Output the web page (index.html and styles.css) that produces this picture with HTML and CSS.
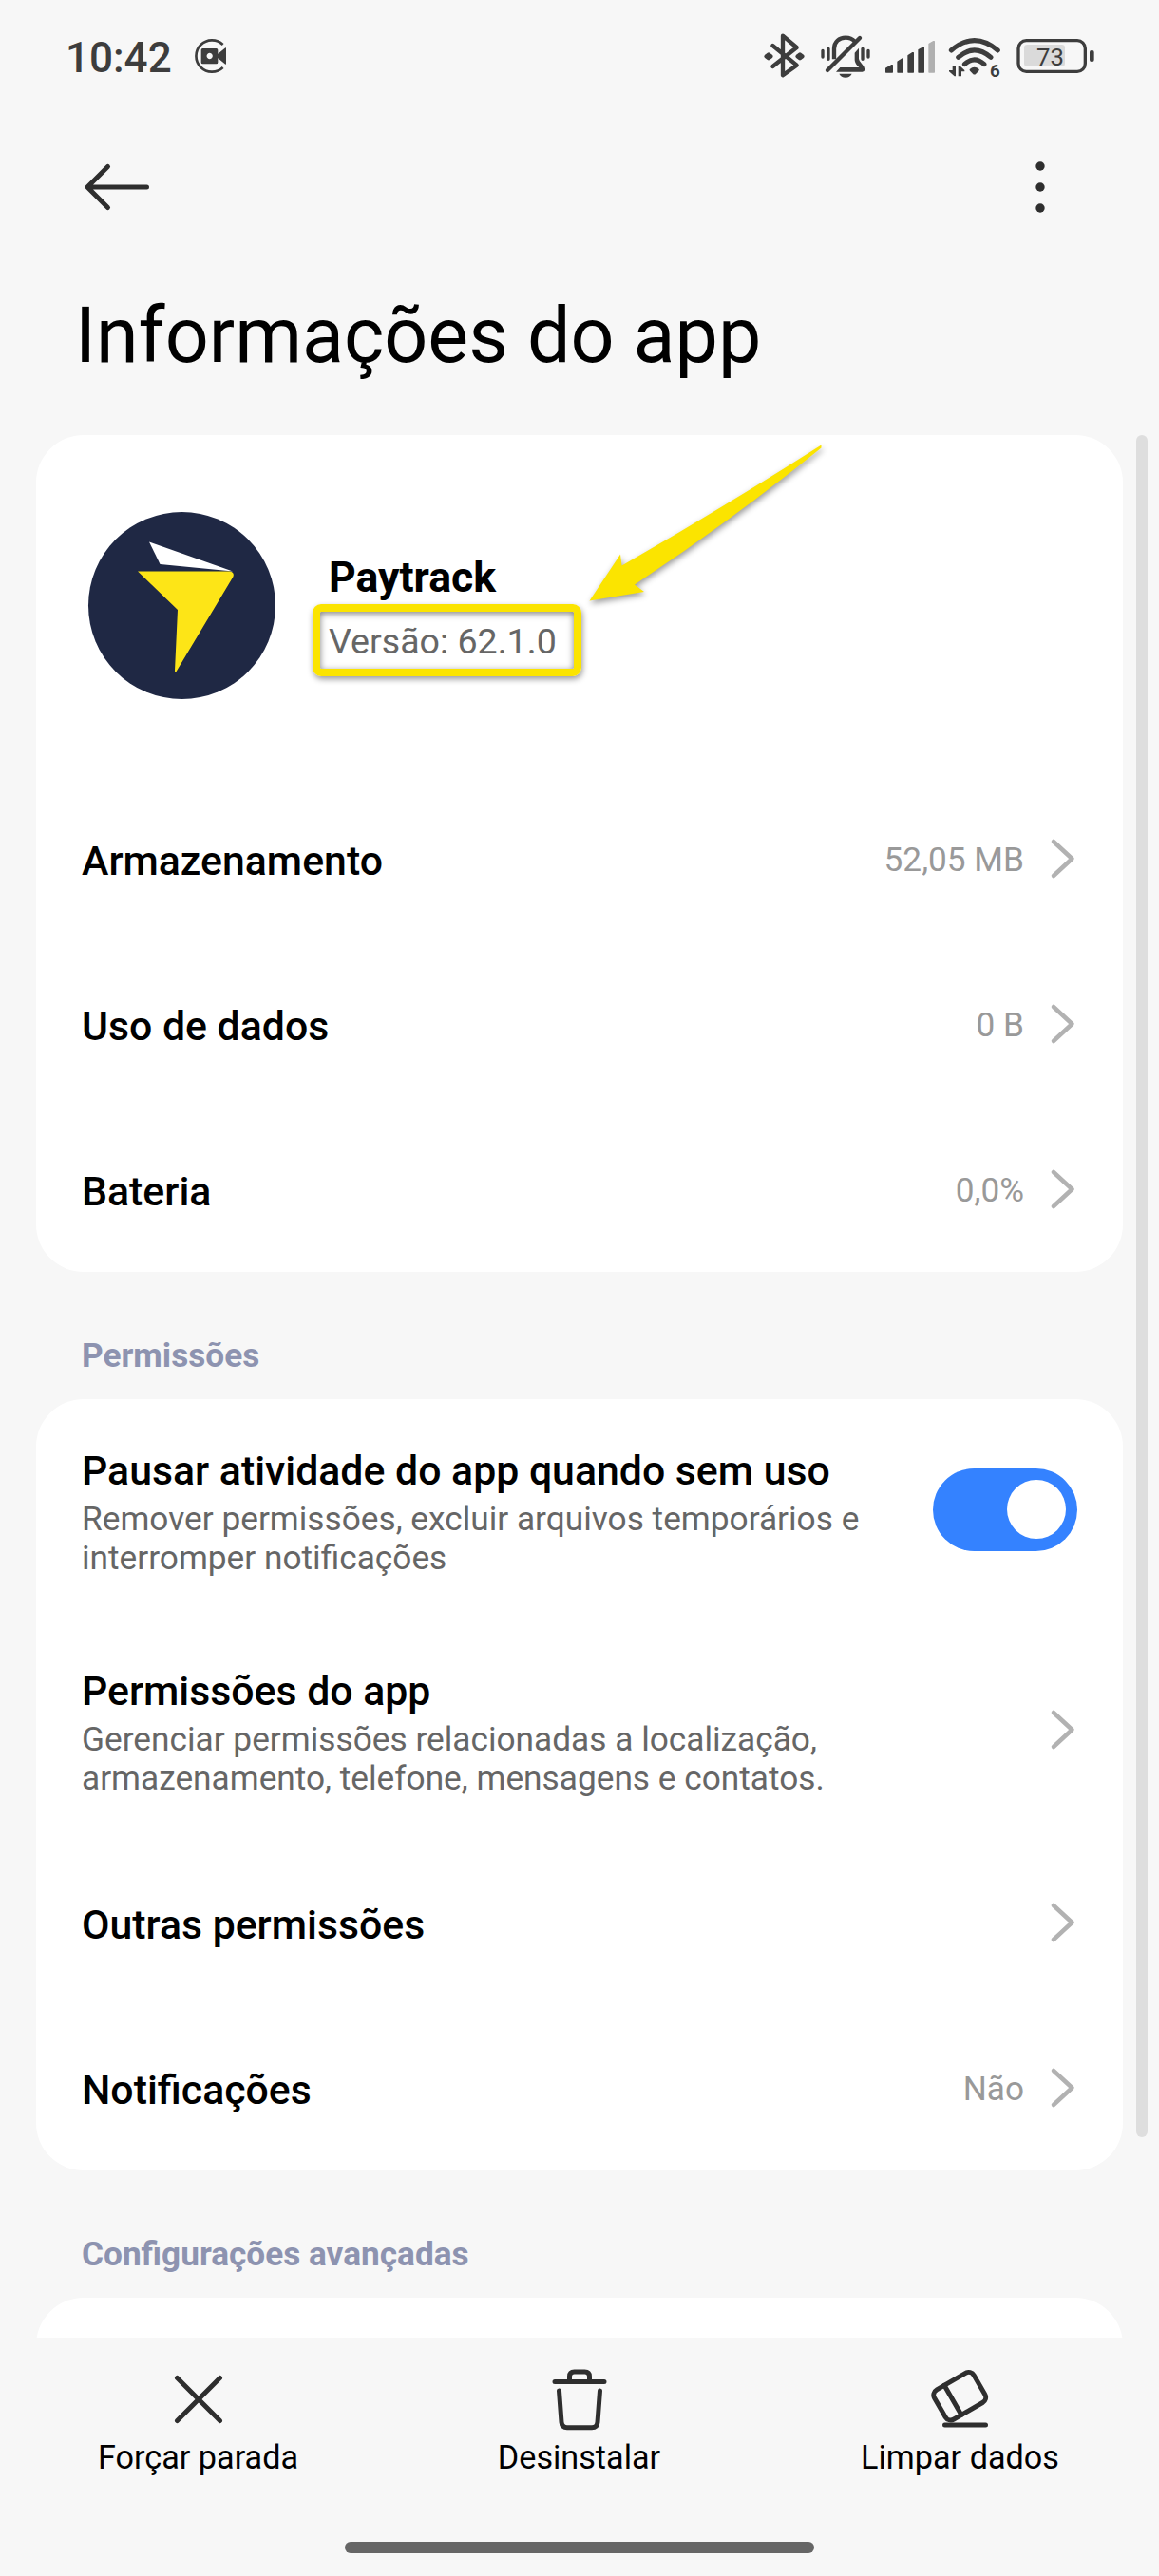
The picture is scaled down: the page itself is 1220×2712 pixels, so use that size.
FILE: index.html
```html
<!DOCTYPE html>
<html lang="pt-BR">
<head>
<meta charset="utf-8">
<title>Informações do app</title>
<link rel="stylesheet" href="styles.css">
</head>
<body>
<div class="screen">
  <header class="status">
    <span class="clock">10:42</span>
    <svg class="rec" width="36" height="38" viewBox="609 120 108 114">
      <path d="M704 141A50 50 0 1 0 704 213" fill="none" stroke="#3d3d3d" stroke-width="8"/>
      <path fill="#3d3d3d" fill-rule="evenodd" d="M640 153H683Q688 153 688 158V170L712 151Q714 150 714 153V201Q714 204 712 203L688 184V197Q688 202 683 202H640Q635 202 635 197V158Q635 153 640 153ZM662 167.500a9.500 9.500 0 1 0 .1 0Z"/>
    </svg>
    <div class="indicators">
      <svg width="54" height="51" viewBox="66 99 162 153">
        <path d="M100 144L176 206L132 238V113L176 150L100 210" fill="none" stroke="#3d3d3d" stroke-width="13" stroke-linejoin="round" stroke-linecap="round"/>
        <path d="M79 178l8-6 8 6-8 6zM178 178l8-6 8 6-8 6z" fill="#3d3d3d" stroke="#3d3d3d" stroke-width="12" stroke-linejoin="round"/>
      </svg>
      <svg width="68" height="51" viewBox="228 99 204 153">
        <g fill="none" stroke="#3d3d3d" stroke-linecap="round">
          <path stroke-width="13" stroke-linecap="butt" d="M294 187V154C294 132 310 119 330 119C342 119 352 123 359 131"/>
          <path stroke-width="13" d="M273 222L375 120"/>
          <path stroke-width="10" d="M258 160V180M276 154V187M384 154V187M402 160V180"/>
        </g>
        <path fill="#3d3d3d" d="M359 167L372 152V186Q373 193 381 201Q391 211 391 220Q390 227 383 227H300L313 213H373Q360 203 359 190ZM310 233H350Q344 245 330 245Q316 245 310 233Z"/>
      </svg>
      <svg width="68" height="51" viewBox="432 99 204 153">
        <g fill="#3d3d3d" stroke="#3d3d3d" stroke-width="4" stroke-linejoin="round">
          <path d="M458 216L476 206H478V228H458ZM495 195L509 186H511V228H495ZM528 176L542 167H544V228H528ZM561 158L575 150H577V228H561Z"/>
          <path fill="#b0b0b0" stroke="#b0b0b0" d="M594 139L608 131H610V228H594Z"/>
        </g>
      </svg>
      <svg width="70" height="51" viewBox="636 99 210 153">
        <g fill="none" stroke="#3d3d3d" stroke-width="15" stroke-linecap="round">
          <path d="M664 159Q737 97 811 159"/>
          <path d="M686 181Q737 136 789 181"/>
          <path d="M706 203Q737 174 768 203"/>
        </g>
        <path fill="#3d3d3d" d="M722 219Q737 205 752 219Q753 222 750 225L742 233Q737 238 732 233L724 225Q721 222 722 219ZM668 207H678V241H674L657 226V222H668ZM686 207H690L706 222V226H696V241H686Z"/>
        <text class="badge" x="786" y="243">6</text>
      </svg>
      <svg width="92" height="51" viewBox="846 99 276 153">
        <rect x="894" y="141" width="129" height="69" rx="10" fill="#dadada"/>
        <rect x="876" y="128" width="211" height="98" rx="25" fill="none" stroke="#3d3d3d" stroke-width="10"/>
        <rect x="1101" y="159" width="14" height="36" rx="6" fill="#3d3d3d"/>
        <text class="level" x="933" y="207">73</text>
      </svg>
    </div>
  </header>

  <nav class="appbar">
    <svg width="70" height="50" viewBox="0 0 70 50" fill="none" stroke="#2e2e2e" stroke-width="5" stroke-linecap="round" stroke-linejoin="round">
      <path d="M26.500 3.500L5 25L26.500 46.500M6 25H67.500"/>
    </svg>
    <svg width="12" height="56" viewBox="0 0 12 56" fill="#2e2e2e">
      <circle cx="6" cy="6" r="4.700"/><circle cx="6" cy="28" r="4.700"/><circle cx="6" cy="50" r="4.700"/>
    </svg>
  </nav>

  <h1 class="title">Informações do app</h1>

  <main class="content">
    <section class="card">
      <div class="app">
        <svg width="197" height="197" viewBox="0 0 197 197">
          <circle cx="98.500" cy="98.500" r="98.500" fill="#1f2844"/>
          <path fill="#fff" d="M64 31.500L152 62.500L75.500 55Z"/>
          <path fill="#fde517" d="M52 62.500H149Q154 63.500 152.500 68L92.500 168Q91 170.500 91 167L94 103Z"/>
        </svg>
        <div class="app-text">
          <div class="app-name">Paytrack</div>
          <div class="app-version">Versão: 62.1.0</div>
        </div>
        <div class="highlight"></div>
        <svg class="pointer" width="260" height="190" viewBox="612 458 260 190">
          <path fill="#fbe400" d="M620.500 632.500L653 583.500L654.500 595.500Q760 535 864.500 468.500V471.500Q770 548 668 615.500L678 623Z"/>
        </svg>
      </div>
      <div class="row"><span class="label">Armazenamento</span><span class="value">52,05 MB</span><svg class="chev" viewBox="0 0 26 42"><path d="M3 3L22.500 21L3 39"/></svg></div>
      <div class="row"><span class="label">Uso de dados</span><span class="value">0 B</span><svg class="chev" viewBox="0 0 26 42"><path d="M3 3L22.500 21L3 39"/></svg></div>
      <div class="row"><span class="label">Bateria</span><span class="value">0,0%</span><svg class="chev" viewBox="0 0 26 42"><path d="M3 3L22.500 21L3 39"/></svg></div>
    </section>

    <h2 class="section">Permissões</h2>
    <section class="card">
      <div class="row tall">
        <div class="text">
          <div class="label">Pausar atividade do app quando sem uso</div>
          <div class="desc">Remover permissões, excluir arquivos temporários e<br>interromper notificações</div>
        </div>
        <div class="toggle"><div class="knob"></div></div>
      </div>
      <div class="row tall">
        <div class="text">
          <div class="label">Permissões do app</div>
          <div class="desc">Gerenciar permissões relacionadas a localização,<br>armazenamento, telefone, mensagens e contatos.</div>
        </div>
        <svg class="chev" viewBox="0 0 26 42"><path d="M3 3L22.500 21L3 39"/></svg>
      </div>
      <div class="row"><span class="label">Outras permissões</span><svg class="chev" viewBox="0 0 26 42"><path d="M3 3L22.500 21L3 39"/></svg></div>
      <div class="row"><span class="label">Notificações</span><span class="value">Não</span><svg class="chev" viewBox="0 0 26 42"><path d="M3 3L22.500 21L3 39"/></svg></div>
    </section>

    <h2 class="section">Configurações avançadas</h2>
    <section class="card partial"></section>
    <div class="scrollbar"></div>
  </main>

  <footer class="actions">
    <div class="action">
      <svg class="icon" viewBox="0 0 70 70"><path d="M12.500 12.500L57.500 57.500M57.500 12.500L12.500 57.500"/></svg>
      <span>Forçar parada</span>
    </div>
    <div class="action">
      <svg class="icon" viewBox="0 0 70 70"><path d="M9 16.500H61M24.500 16V11Q24.500 6 29.500 6H40.500Q45.500 6 45.500 11V16M13.500 26L16 59Q16.500 64.800 22 64.800H48Q53.500 64.800 54 59L56.500 26"/></svg>
      <span>Desinstalar</span>
    </div>
    <div class="action">
      <svg class="icon" viewBox="0 0 70 70"><g transform="translate(34.200 31.700) rotate(-30)"><rect x="-24" y="-18" width="48" height="36" rx="6.500"/><path d="M-8.300 -18V18"/></g><path d="M18.500 62H61.500"/></svg>
      <span>Limpar dados</span>
    </div>
  </footer>
  <div class="home"></div>
</div>
</body>
</html>
```

FILE: styles.css
```css
* { box-sizing: border-box; }

body {
  margin: 0;
  background: #f7f7f7;
  font-family: Roboto, "Noto Sans", sans-serif;
  color: #000;
}

.screen {
  width: 1220px;
  height: 2712px;
  display: flex;
  flex-direction: column;
  overflow: hidden;
}

svg { display: block; flex: none; overflow: visible; }

.status {
  height: 117px;
  padding: 0 66px 0 69px;
  display: flex;
  align-items: center;
}

.clock {
  width: 134px;
  padding-top: 5px;
  font-size: 44px;
  line-height: 60px;
  font-weight: 500;
  color: #3d3d3d;
}

.indicators { display: flex; margin-left: auto; }

.badge { font-size: 56px; font-weight: 700; fill: #3d3d3d; }
.level { font-size: 77px; fill: #3d3d3d; }

.appbar {
  height: 159px;
  padding: 0 119px 0 87px;
  display: flex;
  align-items: center;
  justify-content: space-between;
}

.title {
  height: 182px;
  margin: 0;
  padding: 28px 0 0 79px;
  font-size: 80.8px;
  line-height: 100px;
  font-weight: 400;
}

.content {
  position: relative;
  height: 2003px;
  padding: 0 38px;
  overflow: hidden;
}

.card {
  background: #fff;
  border-radius: 50px;
}

.partial { height: 100px; }

.app {
  position: relative;
  height: 359px;
  padding: 81px 0 0 55px;
  display: flex;
  gap: 56px;
}

.app-text { padding-top: 39px; }

.app-name {
  font-size: 44.6px;
  line-height: 60px;
  font-weight: 700;
}

.app-version {
  padding-top: 11px;
  font-size: 37.6px;
  line-height: 52px;
  color: #666;
}

.highlight {
  position: absolute;
  left: 291px;
  top: 178px;
  width: 283px;
  height: 76px;
  border: 8px solid #fbe400;
  border-radius: 9px;
  box-shadow: 1px 3px 6px rgba(0, 0, 0, .4), inset 0 2px 7px rgba(0, 0, 0, .5);
}

.pointer {
  position: absolute;
  left: 574px;
  top: 0;
  filter: drop-shadow(1px 3px 3px rgba(0, 0, 0, .4));
}

.row {
  height: 174px;
  padding: 0 50px 0 48px;
  display: flex;
  align-items: center;
}

.tall { height: 232px; justify-content: space-between; }

.label {
  padding-top: 3px;
  font-size: 42.8px;
  line-height: 54px;
  font-weight: 500;
}

.value {
  margin-left: auto;
  padding-top: 2px;
  font-size: 35.2px;
  line-height: 50px;
  color: #999;
}

.desc {
  margin-top: 4px;
  font-size: 35.25px;
  line-height: 41px;
  color: #666;
}

.chev {
  width: 26px;
  height: 42px;
  margin-left: 28px;
  fill: none;
  stroke: #b2b2b2;
  stroke-width: 4.5px;
  stroke-linecap: round;
  stroke-linejoin: round;
}

.label + .chev { margin-left: auto; }

.toggle {
  width: 152px;
  height: 87px;
  margin-right: -2px;
  padding-right: 12px;
  border-radius: 44px;
  background: #3482ff;
  display: flex;
  align-items: center;
  justify-content: flex-end;
}

.knob {
  width: 62px;
  height: 62px;
  border-radius: 50%;
  background: #fff;
}

.section {
  height: 134px;
  margin: 0;
  padding: 63px 0 0 48px;
  font-size: 35.2px;
  line-height: 50px;
  font-weight: 700;
  color: #8d93b0;
}

.scrollbar {
  position: absolute;
  top: 0;
  right: 12px;
  width: 12px;
  height: 1792px;
  border-radius: 6px;
  background: #dedede;
}

.actions {
  height: 215px;
  padding: 30px 9px 0 8px;
  display: grid;
  grid-template-columns: repeat(3, 1fr);
}

.action {
  display: flex;
  flex-direction: column;
  align-items: center;
  font-size: 34.2px;
  line-height: 52px;
}

.icon {
  width: 70px;
  height: 70px;
  fill: none;
  stroke: #2e2e2e;
  stroke-width: 5px;
  stroke-linecap: round;
  stroke-linejoin: round;
}

.home {
  width: 494px;
  height: 12px;
  margin: 0 auto;
  border-radius: 6px;
  background: #666;
}
```
